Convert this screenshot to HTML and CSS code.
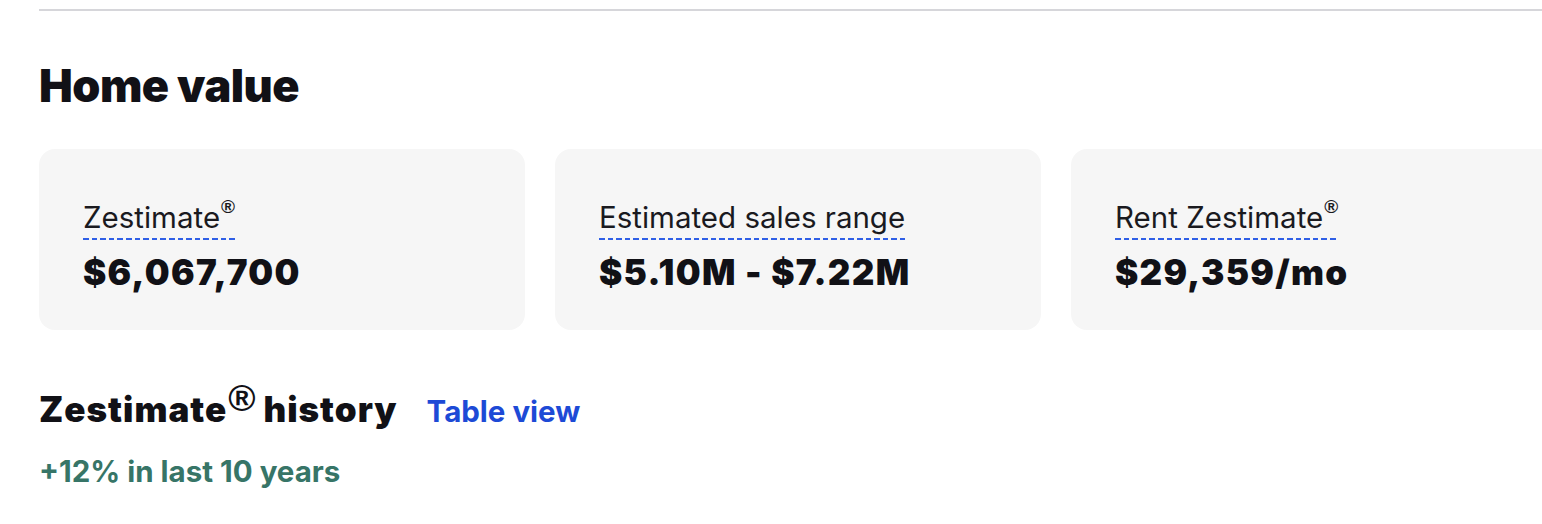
FILE: index.html
```html
<!DOCTYPE html>
<html>
<head>
<meta charset="utf-8">
<link rel="stylesheet" href="styles.css">
</head>
<body>
<div class="page">
  <div class="rule"></div>
  <h1 class="title">Home value</h1>
  <div class="cards">
    <div class="card">
      <span class="label">Zestimate<sup class="reg">®</sup></span>
      <div class="value">$6,067,700</div>
    </div>
    <div class="card">
      <span class="label">Estimated sales range</span>
      <div class="value">$5.10M - $7.22M</div>
    </div>
    <div class="card">
      <span class="label">Rent Zestimate<sup class="reg">®</sup></span>
      <div class="value">$29,359/mo</div>
    </div>
  </div>
  <div class="history">
    <h2 class="subtitle">Zestimate<sup class="reg-big">®</sup> history</h2>
    <a class="link" href="#">Table view</a>
  </div>
  <div class="change">+12% in last 10 years</div>
</div>
</body>
</html>
```
FILE: styles.css
```css
html, body {
  margin: 0;
  padding: 0;
  background: #ffffff;
}
body {
  font-family: Inter, "Noto Sans", sans-serif;
  color: #111116;
  width: 1542px;
  height: 524px;
  overflow: hidden;
}
.page {
  padding: 9px 0 0 39px;
}
.rule {
  height: 2px;
  background: #d6d6da;
}
.title {
  margin: 48px 0 0 0;
  font-size: 45px;
  line-height: 54px;
  font-weight: 900;
  letter-spacing: -0.5px;
}
.cards {
  display: flex;
  gap: 30px;
  margin-top: 36px;
}
.card {
  flex: 0 0 486px;
  height: 181px;
  box-sizing: border-box;
  background: #f6f6f6;
  border-radius: 16px;
  padding: 50px 44px 0 44px;
}
.label {
  display: inline-block;
  font-size: 29.5px;
  line-height: 36px;
  font-weight: 400;
  color: #1a1a1f;
  padding-bottom: 5px;
  background-image: repeating-linear-gradient(90deg, #2f5fe6 0 5.6px, transparent 5.6px 8.6px);
  background-size: 100% 2px;
  background-position: left bottom;
  background-repeat: no-repeat;
}
.reg {
  font-family: "Liberation Sans", Arial, sans-serif;
  font-size: 19px;
  line-height: 0;
  font-weight: 700;
  vertical-align: 15px;
  margin-left: 1px;
}
.value {
  margin-top: 11px;
  font-size: 35px;
  line-height: 42px;
  font-weight: 900;
  letter-spacing: 1.3px;
}
.history {
  display: flex;
  align-items: baseline;
  gap: 29px;
  margin-top: 57px;
}
.subtitle {
  margin: 0;
  font-size: 35px;
  line-height: 44px;
  font-weight: 900;
  letter-spacing: 1px;
}
.reg-big {
  font-family: "Liberation Sans", Arial, sans-serif;
  font-size: 37px;
  line-height: 0;
  font-weight: 700;
  vertical-align: 11px;
  letter-spacing: 0;
  margin-left: 1px;
}
.link {
  font-size: 29.5px;
  font-weight: 700;
  color: #1d4ad6;
  text-decoration: none;
}
.change {
  margin-top: 22px;
  font-size: 29.5px;
  line-height: 36px;
  font-weight: 700;
  color: #377567;
}
```
